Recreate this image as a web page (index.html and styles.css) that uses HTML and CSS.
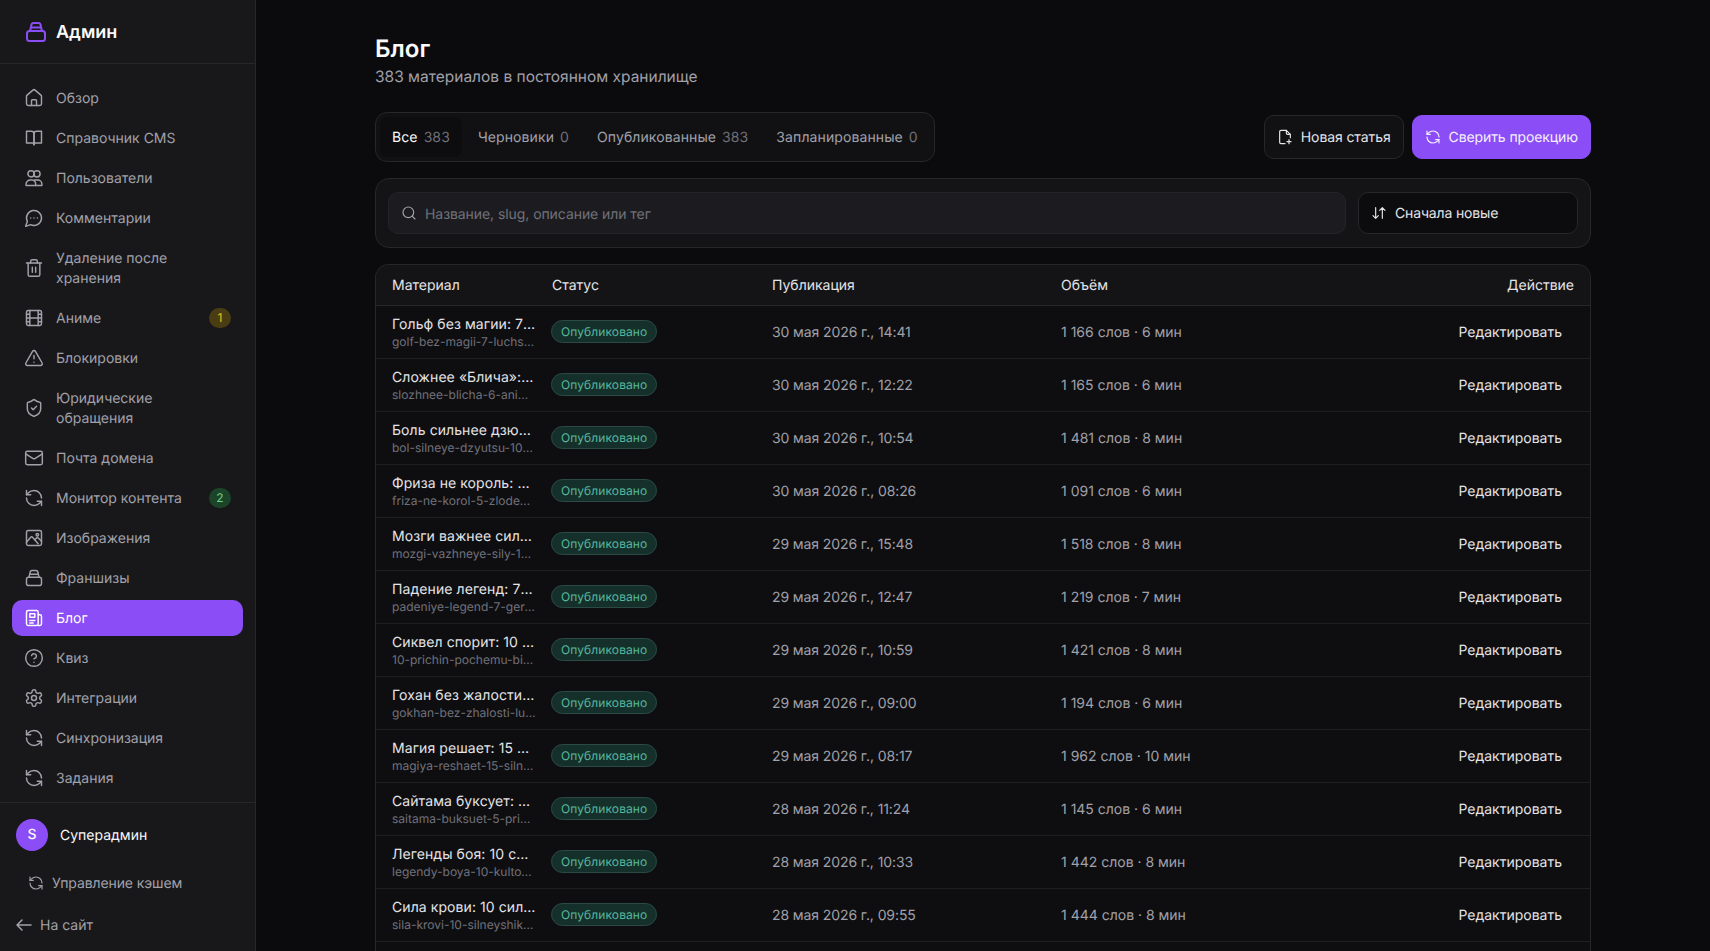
FILE: index.html
```html
<!DOCTYPE html>
<html lang="ru">

<head>
  <meta charset="utf-8">
  <title>Блог</title>
  <link rel="stylesheet" href="styles.css">
</head>

<body>
  <svg class="sprite" xmlns="http://www.w3.org/2000/svg">
    <symbol id="i-box" viewBox="0 0 24 24"><rect x="3" y="11" width="18" height="10" rx="2.500"/><path d="M6 11l1.300-5.300A2.300 2.300 0 0 1 9.500 3h5a2.300 2.300 0 0 1 2.200 2.700L18 11"/><path d="M7 7.500h10"/></symbol>
    <symbol id="i-home" viewBox="0 0 24 24"><path d="M15 21v-6a1 1 0 0 0-1-1h-4a1 1 0 0 0-1 1v6"/><path d="M3 10a2 2 0 0 1 .7-1.500l7-6a2 2 0 0 1 2.600 0l7 6a2 2 0 0 1 .7 1.500v9a2 2 0 0 1-2 2H5a2 2 0 0 1-2-2z"/></symbol>
    <symbol id="i-book" viewBox="0 0 24 24"><path d="M3 4h6a3 3 0 0 1 3 3v13a2 2 0 0 0-2-2H3z"/><path d="M21 4h-6a3 3 0 0 0-3 3v13a2 2 0 0 1 2-2h7z"/></symbol>
    <symbol id="i-users" viewBox="0 0 24 24"><circle cx="8.500" cy="7" r="3.800"/><circle cx="15.500" cy="7" r="3.800"/><path d="M2.500 21v-1.500a5 5 0 0 1 5-5h2a5 5 0 0 1 4.500 5V21z"/><path d="M12.500 14.500h4a5 5 0 0 1 5 5V21H14"/></symbol>
    <symbol id="i-comment" viewBox="0 0 24 24"><path d="M7.900 20A9 9 0 1 0 4 16.100L2 22Z"/><path d="M8 12h.01M12 12h.01M16 12h.01"/></symbol>
    <symbol id="i-trash" viewBox="0 0 24 24"><path d="M3 6h18"/><path d="M19 6v14a2 2 0 0 1-2 2H7a2 2 0 0 1-2-2V6"/><path d="M8 6V4a2 2 0 0 1 2-2h4a2 2 0 0 1 2 2v2"/><path d="M10 11v6M14 11v6"/></symbol>
    <symbol id="i-film" viewBox="0 0 24 24"><rect x="3" y="3" width="18" height="18" rx="2"/><path d="M7 3v18M17 3v18M3 12h18M3 7.500h4M3 16.500h4M17 7.500h4M17 16.500h4"/></symbol>
    <symbol id="i-alert" viewBox="0 0 24 24"><path d="m21.730 18-8-14a2 2 0 0 0-3.480 0l-8 14A2 2 0 0 0 4 21h16a2 2 0 0 0 1.730-3"/><path d="M12 9v4M12 17h.01"/></symbol>
    <symbol id="i-shield" viewBox="0 0 24 24"><path d="M20 13c0 5-3.500 7.500-7.660 8.950a1 1 0 0 1-.67-.01C7.500 20.500 4 18 4 13V6a1 1 0 0 1 1-1c2 0 4.500-1.200 6.240-2.720a1.170 1.170 0 0 1 1.520 0C14.510 3.810 17 5 19 5a1 1 0 0 1 1 1z"/><path d="m9 12 2 2 4-4"/></symbol>
    <symbol id="i-mail" viewBox="0 0 24 24"><rect x="2" y="4" width="20" height="16" rx="2"/><path d="m22 7-8.970 5.700a1.940 1.940 0 0 1-2.060 0L2 7"/></symbol>
    <symbol id="i-refresh" viewBox="0 0 24 24"><path d="M21 12a9 9 0 0 0-9-9 9.750 9.750 0 0 0-6.740 2.740L3 8"/><path d="M3 3v5h5"/><path d="M3 12a9 9 0 0 0 9 9 9.750 9.750 0 0 0 6.740-2.740L21 16"/><path d="M16 16h5v5"/></symbol>
    <symbol id="i-image" viewBox="0 0 24 24"><rect x="3" y="3" width="18" height="18" rx="2"/><circle cx="16" cy="8" r="1.500"/><path d="m3 17 5-6a1.500 1.500 0 0 1 2.300 0L17 19"/><path d="m13 14 2-2a1.500 1.500 0 0 1 2.100 0L21 16"/></symbol>
    <symbol id="i-news" viewBox="0 0 24 24"><rect x="3" y="3" width="14" height="18" rx="2"/><path d="M17 8h2a2 2 0 0 1 2 2v9a2 2 0 0 1-2 2h-2"/><path d="M7 7h6v4H7zM7 15h6M7 18h4"/></symbol>
    <symbol id="i-help" viewBox="0 0 24 24"><circle cx="12" cy="12" r="10"/><path d="M9.090 9a3 3 0 0 1 5.830 1c0 2-3 3-3 3"/><path d="M12 17h.01"/></symbol>
    <symbol id="i-gear" viewBox="0 0 24 24"><path d="M12.220 2h-.44a2 2 0 0 0-2 2v.18a2 2 0 0 1-1 1.730l-.43.25a2 2 0 0 1-2 0l-.15-.08a2 2 0 0 0-2.730.73l-.22.38a2 2 0 0 0 .73 2.730l.15.1a2 2 0 0 1 1 1.720v.51a2 2 0 0 1-1 1.740l-.15.09a2 2 0 0 0-.73 2.730l.22.38a2 2 0 0 0 2.730.73l.15-.08a2 2 0 0 1 2 0l.43.25a2 2 0 0 1 1 1.730V20a2 2 0 0 0 2 2h.44a2 2 0 0 0 2-2v-.18a2 2 0 0 1 1-1.730l.43-.25a2 2 0 0 1 2 0l.15.08a2 2 0 0 0 2.730-.73l.22-.39a2 2 0 0 0-.73-2.730l-.15-.08a2 2 0 0 1-1-1.740v-.5a2 2 0 0 1 1-1.740l.15-.09a2 2 0 0 0 .73-2.730l-.22-.38a2 2 0 0 0-2.730-.73l-.15.08a2 2 0 0 1-2 0l-.43-.25a2 2 0 0 1-1-1.730V4a2 2 0 0 0-2-2z"/><circle cx="12" cy="12" r="3"/></symbol>
    <symbol id="i-back" viewBox="0 0 24 24"><path d="m10 17-5-5 5-5M19 12H5"/></symbol>
    <symbol id="i-file" viewBox="0 0 24 24"><path d="M14 2H6a2 2 0 0 0-2 2v16a2 2 0 0 0 2 2h6"/><path d="M14 2v4a2 2 0 0 0 2 2h4l-6-6"/><path d="M20 8v5M18 16v6M15 19h6"/></symbol>
    <symbol id="i-sort" viewBox="0 0 24 24"><path d="m21 8-4-4-4 4M17 4v16"/><path d="m3 16 4 4 4-4M7 20V4"/></symbol>
    <symbol id="i-search" viewBox="0 0 24 24"><circle cx="11" cy="11" r="8"/><path d="m21 21-4.300-4.300"/></symbol>
  </svg>

  <div class="layout">
    <aside class="sidebar">
      <div class="brand">
        <svg class="icon brand-icon"><use href="#i-box"/></svg>
        <span>Админ</span>
      </div>

      <nav class="nav">
        <a class="nav-item"><svg class="icon"><use href="#i-home"/></svg><span>Обзор</span></a>
        <a class="nav-item"><svg class="icon"><use href="#i-book"/></svg><span>Справочник CMS</span></a>
        <a class="nav-item"><svg class="icon"><use href="#i-users"/></svg><span>Пользователи</span></a>
        <a class="nav-item"><svg class="icon"><use href="#i-comment"/></svg><span>Комментарии</span></a>
        <a class="nav-item"><svg class="icon"><use href="#i-trash"/></svg><span>Удаление после хранения</span></a>
        <a class="nav-item"><svg class="icon"><use href="#i-film"/></svg><span>Аниме</span><b class="count count-yellow">1</b></a>
        <a class="nav-item"><svg class="icon"><use href="#i-alert"/></svg><span>Блокировки</span></a>
        <a class="nav-item"><svg class="icon"><use href="#i-shield"/></svg><span>Юридические обращения</span></a>
        <a class="nav-item"><svg class="icon"><use href="#i-mail"/></svg><span>Почта домена</span></a>
        <a class="nav-item"><svg class="icon"><use href="#i-refresh"/></svg><span>Монитор контента</span><b class="count count-green">2</b></a>
        <a class="nav-item"><svg class="icon"><use href="#i-image"/></svg><span>Изображения</span></a>
        <a class="nav-item"><svg class="icon"><use href="#i-box"/></svg><span>Франшизы</span></a>
        <a class="nav-item active"><svg class="icon"><use href="#i-news"/></svg><span>Блог</span></a>
        <a class="nav-item"><svg class="icon"><use href="#i-help"/></svg><span>Квиз</span></a>
        <a class="nav-item"><svg class="icon"><use href="#i-gear"/></svg><span>Интеграции</span></a>
        <a class="nav-item"><svg class="icon"><use href="#i-refresh"/></svg><span>Синхронизация</span></a>
        <a class="nav-item"><svg class="icon"><use href="#i-refresh"/></svg><span>Задания</span></a>
      </nav>

      <div class="side-footer">
        <div class="user">
          <span class="avatar">S</span>
          <span class="label">Суперадмин</span>
        </div>
        <a class="cache-link"><svg class="icon icon-sm"><use href="#i-refresh"/></svg><span class="label">Управление кэшем</span></a>
        <a class="site-link"><svg class="icon icon-back"><use href="#i-back"/></svg><span class="label">На сайт</span></a>
      </div>
    </aside>

    <main class="main">
      <div class="content">
        <h1>Блог</h1>
        <p class="subtitle">383 материалов в постоянном хранилище</p>

        <div class="toolbar">
          <div class="tabs">
            <a class="tab active">Все <span>383</span></a>
            <a class="tab">Черновики <span>0</span></a>
            <a class="tab">Опубликованные <span>383</span></a>
            <a class="tab">Запланированные <span>0</span></a>
          </div>
          <div class="actions">
            <button class="btn"><svg class="icon icon-sm"><use href="#i-file"/></svg>Новая статья</button>
            <button class="btn btn-primary"><svg class="icon icon-sm"><use href="#i-refresh"/></svg>Сверить проекцию</button>
          </div>
        </div>

        <div class="filters">
          <label class="search">
            <svg class="icon icon-sm"><use href="#i-search"/></svg>
            <input type="text" placeholder="Название, slug, описание или тег">
          </label>
          <div class="sort"><svg class="icon icon-sm"><use href="#i-sort"/></svg><span class="label">Сначала новые</span></div>
        </div>

        <div class="table-wrap">
          <table>
            <colgroup>
              <col class="col-material">
              <col class="col-status">
              <col class="col-date">
              <col class="col-volume">
              <col>
            </colgroup>
            <thead>
              <tr>
                <th>Материал</th>
                <th>Статус</th>
                <th>Публикация</th>
                <th>Объём</th>
                <th class="right">Действие</th>
              </tr>
            </thead>
            <tbody>
              <tr>
                <td class="material"><div class="title">Гольф без магии: 7 лучших</div><div class="slug">golf-bez-magii-7-luchshikh</div></td>
                <td class="status"><span class="badge">Опубликовано</span></td>
                <td class="date">30 мая 2026 г., 14:41</td>
                <td>1 166 слов · 6 мин</td>
                <td class="right"><a class="edit">Редактировать</a></td>
              </tr>
              <tr>
                <td class="material"><div class="title">Сложнее «Блича»: 6 аниме</div><div class="slug">slozhnee-blicha-6-anime-pro</div></td>
                <td class="status"><span class="badge">Опубликовано</span></td>
                <td class="date">30 мая 2026 г., 12:22</td>
                <td>1 165 слов · 6 мин</td>
                <td class="right"><a class="edit">Редактировать</a></td>
              </tr>
              <tr>
                <td class="material"><div class="title">Боль сильнее дзюцу: 10</div><div class="slug">bol-silneye-dzyutsu-10-anime</div></td>
                <td class="status"><span class="badge">Опубликовано</span></td>
                <td class="date">30 мая 2026 г., 10:54</td>
                <td>1 481 слов · 8 мин</td>
                <td class="right"><a class="edit">Редактировать</a></td>
              </tr>
              <tr>
                <td class="material"><div class="title">Фриза не король: 5 злодеев</div><div class="slug">friza-ne-korol-5-zlodeyev</div></td>
                <td class="status"><span class="badge">Опубликовано</span></td>
                <td class="date">30 мая 2026 г., 08:26</td>
                <td>1 091 слов · 6 мин</td>
                <td class="right"><a class="edit">Редактировать</a></td>
              </tr>
              <tr>
                <td class="material"><div class="title">Мозги важнее силы: 10</div><div class="slug">mozgi-vazhneye-sily-10-anime</div></td>
                <td class="status"><span class="badge">Опубликовано</span></td>
                <td class="date">29 мая 2026 г., 15:48</td>
                <td>1 518 слов · 8 мин</td>
                <td class="right"><a class="edit">Редактировать</a></td>
              </tr>
              <tr>
                <td class="material"><div class="title">Падение легенд: 7 аниме</div><div class="slug">padeniye-legend-7-geroyev</div></td>
                <td class="status"><span class="badge">Опубликовано</span></td>
                <td class="date">29 мая 2026 г., 12:47</td>
                <td>1 219 слов · 7 мин</td>
                <td class="right"><a class="edit">Редактировать</a></td>
              </tr>
              <tr>
                <td class="material"><div class="title">Сиквел спорит: 10 причин</div><div class="slug">10-prichin-pochemu-biblioteka</div></td>
                <td class="status"><span class="badge">Опубликовано</span></td>
                <td class="date">29 мая 2026 г., 10:59</td>
                <td>1 421 слов · 8 мин</td>
                <td class="right"><a class="edit">Редактировать</a></td>
              </tr>
              <tr>
                <td class="material"><div class="title">Гохан без жалости: лучшие</div><div class="slug">gokhan-bez-zhalosti-luchshiye</div></td>
                <td class="status"><span class="badge">Опубликовано</span></td>
                <td class="date">29 мая 2026 г., 09:00</td>
                <td>1 194 слов · 6 мин</td>
                <td class="right"><a class="edit">Редактировать</a></td>
              </tr>
              <tr>
                <td class="material"><div class="title">Магия решает: 15 сильных</div><div class="slug">magiya-reshaet-15-silnykh</div></td>
                <td class="status"><span class="badge">Опубликовано</span></td>
                <td class="date">29 мая 2026 г., 08:17</td>
                <td>1 962 слов · 10 мин</td>
                <td class="right"><a class="edit">Редактировать</a></td>
              </tr>
              <tr>
                <td class="material"><div class="title">Сайтама буксует: 5 причин</div><div class="slug">saitama-buksuet-5-prichin</div></td>
                <td class="status"><span class="badge">Опубликовано</span></td>
                <td class="date">28 мая 2026 г., 11:24</td>
                <td>1 145 слов · 6 мин</td>
                <td class="right"><a class="edit">Редактировать</a></td>
              </tr>
              <tr>
                <td class="material"><div class="title">Легенды боя: 10 самых</div><div class="slug">legendy-boya-10-kultovykh</div></td>
                <td class="status"><span class="badge">Опубликовано</span></td>
                <td class="date">28 мая 2026 г., 10:33</td>
                <td>1 442 слов · 8 мин</td>
                <td class="right"><a class="edit">Редактировать</a></td>
              </tr>
              <tr>
                <td class="material"><div class="title">Сила крови: 10 сильнейших</div><div class="slug">sila-krovi-10-silneyshikh-geroyev</div></td>
                <td class="status"><span class="badge">Опубликовано</span></td>
                <td class="date">28 мая 2026 г., 09:55</td>
                <td>1 444 слов · 8 мин</td>
                <td class="right"><a class="edit">Редактировать</a></td>
              </tr>
              <tr class="row-tail"><td colspan="5"></td></tr>
            </tbody>
          </table>
        </div>
      </div>
    </main>
  </div>
</body>

</html>
```

FILE: styles.css
```css
:root {
  --main-bg: #0b0b0e;
  --side-bg: #18181b;
  --panel-bg: #141417;
  --border: #27272a;
  --row-border: #1f1f22;
  --text: #fafafa;
  --text-soft: #e4e4e7;
  --muted: #a1a1aa;
  --faint: #71717a;
  --accent: #8b4df5;
}

* {
  box-sizing: border-box;
}

body {
  margin: 0;
  height: 100vh;
  overflow: hidden;
  background-color: var(--main-bg);
  color: var(--text);
  font-family: Inter, "Liberation Sans", sans-serif;
  font-size: 14px;
  line-height: 20px;
  text-rendering: geometricPrecision;
}

.sprite {
  display: none;
}

.icon {
  width: 20px;
  height: 20px;
  flex-shrink: 0;
  fill: none;
  stroke: currentColor;
  stroke-width: 1.75;
  stroke-linecap: round;
  stroke-linejoin: round;
}

.icon-sm {
  width: 16px;
  height: 16px;
}

.icon-back {
  width: 24px;
  height: 24px;
  margin-left: -4px;
  stroke-width: 1.5;
}

.label,
.brand span,
.nav-item span {
  margin: 1px 0 -1px;
}

.layout {
  display: flex;
  height: 100vh;
}

/* Sidebar */
.sidebar {
  width: 256px;
  flex-shrink: 0;
  display: flex;
  flex-direction: column;
  background-color: var(--side-bg);
  border-right: 1px solid var(--border);
}

.brand {
  display: flex;
  align-items: center;
  gap: 8px;
  height: 64px;
  padding: 0 24px;
  border-bottom: 1px solid var(--border);
  font-size: 18px;
  font-weight: 600;
}

.brand-icon {
  width: 24px;
  height: 24px;
  color: var(--accent);
  stroke-width: 2;
}

.nav {
  display: flex;
  flex-direction: column;
  gap: 4px;
  padding: 16px 12px 6px;
}

.nav-item {
  display: flex;
  align-items: center;
  gap: 12px;
  min-height: 36px;
  padding: 8px 12px;
  border-radius: 10px;
  color: var(--muted);
}

.nav-item span {
  flex: 1;
}

.nav-item.active {
  background-color: var(--accent);
  color: #fff;
}

.count {
  width: 22px;
  height: 20px;
  border-radius: 10px;
  font-size: 12px;
  font-weight: 400;
  line-height: 20px;
  text-align: center;
}

.count-yellow {
  background-color: #4a3d14;
  color: #e3c21c;
}

.count-green {
  background-color: #1c4429;
  color: #6fd08c;
}

.side-footer {
  flex: 1;
  border-top: 1px solid var(--border);
  padding: 16px 16px 0;
}

.user {
  display: flex;
  align-items: center;
  gap: 12px;
}

.avatar {
  width: 32px;
  height: 32px;
  border-radius: 50%;
  background-color: var(--accent);
  font-weight: 500;
  line-height: 32px;
  text-align: center;
}

.cache-link,
.site-link {
  display: flex;
  align-items: center;
  color: var(--muted);
}

.cache-link {
  gap: 8px;
  margin-top: 22px;
  padding-left: 12px;
  letter-spacing: -0.1px;
}

.site-link {
  gap: 4px;
  margin-top: 20px;
}

/* Main */
.main {
  flex: 1;
  min-width: 0;
}

.content {
  max-width: 1216px;
  margin: 0 auto;
  padding-top: 33px;
}

h1 {
  margin: 0;
  font-size: 24px;
  font-weight: 600;
  line-height: 32px;
}

.subtitle {
  margin: 0;
  color: var(--muted);
  font-size: 15.500px;
  line-height: 23px;
}

.toolbar {
  display: flex;
  align-items: center;
  justify-content: space-between;
  margin-top: 24px;
}

.tabs {
  display: flex;
  gap: 4px;
  height: 50px;
  padding: 4px;
  background-color: #111114;
  border: 1px solid var(--border);
  border-radius: 12px;
}

.tab {
  display: flex;
  align-items: center;
  gap: 6px;
  padding: 2px 12px 0;
  border-radius: 8px;
  color: var(--muted);
  letter-spacing: 0.1px;
}

.tab span {
  color: var(--faint);
}

.tab.active {
  background-color: #0d0d10;
  color: var(--text);
}

.actions {
  display: flex;
  gap: 8px;
}

.btn {
  display: flex;
  align-items: center;
  gap: 8px;
  height: 44px;
  padding: 0 12px;
  background-color: #111114;
  border: 1px solid var(--border);
  border-radius: 10px;
  color: var(--text-soft);
  font-family: inherit;
  font-size: 14px;
  font-weight: 400;
  letter-spacing: -0.1px;
  text-rendering: geometricPrecision;
}

.btn-primary {
  background-color: var(--accent);
  border-color: var(--accent);
  color: #f4f0ff;
}

.filters {
  display: flex;
  gap: 12px;
  height: 70px;
  margin-top: 16px;
  padding: 13px 12px;
  background-color: var(--panel-bg);
  border: 1px solid var(--border);
  border-radius: 14px;
}

.search {
  flex: 1;
  display: flex;
  align-items: center;
  gap: 8px;
  padding: 0 12px;
  background-color: #1c1c20;
  border: 1px solid #242428;
  border-radius: 10px;
  color: var(--muted);
}

.search input {
  flex: 1;
  padding: 2px 0 0;
  background: none;
  border: none;
  outline: none;
  color: var(--text);
  font-family: inherit;
  font-size: 14px;
  letter-spacing: -0.07px;
  text-rendering: geometricPrecision;
}

.search input::placeholder {
  color: var(--faint);
}

.sort {
  width: 220px;
  display: flex;
  align-items: center;
  gap: 8px;
  padding: 0 12px;
  background-color: #0c0c0f;
  border: 1px solid var(--border);
  border-radius: 10px;
  color: var(--text-soft);
  letter-spacing: -0.15px;
}

/* Table */
.table-wrap {
  margin-top: 16px;
  background-color: #0e0e11;
  border: 1px solid var(--border);
  border-bottom: none;
  border-radius: 14px 14px 0 0;
  overflow: hidden;
}

table {
  width: 100%;
  table-layout: fixed;
  border-collapse: collapse;
}

.col-material {
  width: 160px;
}

.col-status {
  width: 220px;
}

.col-date {
  width: 289px;
}

.col-volume {
  width: 260px;
}

th {
  height: 40px;
  padding: 2px 16px 0;
  background-color: #141417;
  border-bottom: 1px solid var(--border);
  color: var(--text-soft);
  font-weight: 400;
  text-align: left;
}

td {
  height: 53px;
  padding: 2px 16px 0;
  border-bottom: 1px solid var(--row-border);
  color: var(--muted);
}

th.right,
td.right {
  text-align: right;
}

td.material {
  padding: 1px 0 0 16px;
}

td.status {
  padding-top: 0;
}

td.date {
  letter-spacing: -0.1px;
}

.title,
.slug {
  white-space: nowrap;
  overflow: hidden;
  text-overflow: ellipsis;
}

.title {
  margin: 1px 0 -1px;
  color: var(--text-soft);
  letter-spacing: 0.08px;
}

.slug {
  color: var(--faint);
  font-size: 12px;
  line-height: 16px;
}

.badge {
  display: inline-block;
  height: 23px;
  margin-left: -1px;
  padding: 0 9px;
  background-color: #15302b;
  border: 1px solid #2b4a43;
  border-radius: 12px;
  color: #55b79d;
  font-size: 12px;
  letter-spacing: 0.1px;
  line-height: 21px;
}

.edit {
  margin-right: 12px;
  color: var(--text-soft);
}

.row-tail td {
  border-bottom: none;
}
```
